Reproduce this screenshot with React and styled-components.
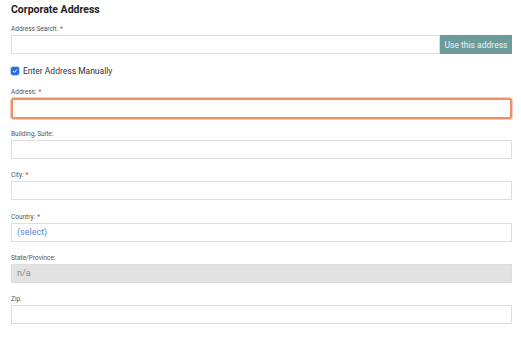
import React from 'react';
import styled, { createGlobalStyle } from 'styled-components';

const GlobalStyle = createGlobalStyle`
  html, body {
    margin: 0;
    padding: 0;
    background: #ffffff;
    font-family: Roboto, "Liberation Sans", Arial, sans-serif;
  }
`;

const Page = styled.div`
  padding: 3px 9px 0 11px;
`;

const Title = styled.h2`
  margin: 0 0 8px;
  font-size: 10.5px;
  line-height: 14px;
  font-weight: 700;
  color: #222;
`;

const Field = styled.div`
  margin-bottom: ${props => props.$gap ?? 12.3}px;
`;

const Label = styled.label`
  display: block;
  font-size: 6.5px;
  line-height: 8px;
  color: #555;
  margin-bottom: 2px;
`;

const Required = styled.span`
  color: #d9363e;
  margin-left: 2px;
`;

const Input = styled.div`
  box-sizing: border-box;
  height: ${props => (props.$focused ? 21 : 19)}px;
  border: ${props => (props.$focused ? '2px solid #ee8f6a' : '1px solid #dedede')};
  border-radius: ${props => (props.$focused ? '3px' : '0')};
  box-shadow: ${props => (props.$focused ? '0 0 0 1px rgba(238, 143, 106, 0.45)' : 'none')};
  background: ${props => (props.$disabled ? '#e2e2e2' : '#fff')};
  display: flex;
  align-items: center;
  padding-left: 5px;
  font-size: 9px;
  color: ${props => props.$color || '#333'};
  flex: 1;
`;

const SearchRow = styled.div`
  display: flex;
`;

const UseButton = styled.button`
  box-sizing: border-box;
  height: 19px;
  width: 72px;
  border: none;
  background: #6c9b9b;
  color: #eef4f4;
  font-family: inherit;
  font-size: 8.5px;
  padding: 0;
`;

const CheckRow = styled.div`
  display: flex;
  align-items: center;
  gap: 4px;
  margin: 0 0 12px;
  font-size: 8.5px;
  color: #333;
`;

const Box = styled.span`
  width: 8px;
  height: 8px;
  border-radius: 2px;
  background: #1f6fdc;
  box-shadow: 0 0 0 1px rgba(31, 111, 220, 0.3);
  display: flex;
  align-items: center;
  justify-content: center;
`;

const fields = [
  { label: 'Building, Suite:' },
  { label: 'City:', required: true },
  { label: 'Country:', required: true, value: '(select)', color: '#5a88d6' },
  { label: 'State/Province:', value: 'n/a', color: '#8a8a8a', disabled: true },
  { label: 'Zip:' },
];

export default function App() {
  return (
    <Page>
      <GlobalStyle />
      <Title>Corporate Address</Title>
      <Field $gap={12}>
        <Label>Address Search:<Required>*</Required></Label>
        <SearchRow>
          <Input />
          <UseButton>Use this address</UseButton>
        </SearchRow>
      </Field>
      <CheckRow>
        <Box>
          <svg width="6" height="6" viewBox="0 0 10 10">
            <path d="M2 5.2 L4.2 7.3 L8 2.8" fill="none" stroke="#fff" strokeWidth="1.6" strokeLinecap="round" strokeLinejoin="round" />
          </svg>
        </Box>
        Enter Address Manually
      </CheckRow>
      <Field $gap={11}>
        <Label>Address:<Required>*</Required></Label>
        <Input $focused />
      </Field>
      {fields.map((f, i) => (
        <Field key={i}>
          <Label>
            {f.label}
            {f.required && <Required>*</Required>}
          </Label>
          <Input $disabled={f.disabled} $color={f.color}>{f.value}</Input>
        </Field>
      ))}
    </Page>
  );
}
